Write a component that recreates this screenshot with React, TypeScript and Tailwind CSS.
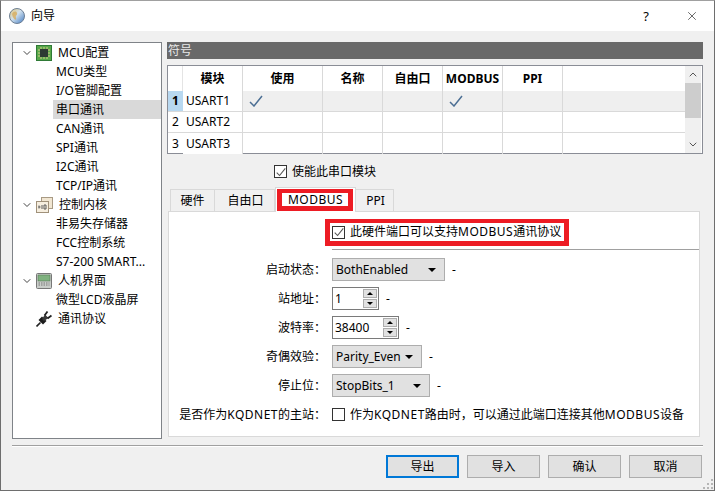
import React from 'react';
import { ChevronDown, ChevronUp, X } from 'lucide-react';

const treeItems = [
  { label: 'MCU配置', icon: 'chip', open: true },
  { label: 'MCU类型' },
  { label: 'I/O管脚配置' },
  { label: '串口通讯', selected: true },
  { label: 'CAN通讯' },
  { label: 'SPI通讯' },
  { label: 'I2C通讯' },
  { label: 'TCP/IP通讯' },
  { label: '控制内核', icon: 'core', open: true },
  { label: '非易失存储器' },
  { label: 'FCC控制系统' },
  { label: 'S7-200 SMART...' },
  { label: '人机界面', icon: 'hmi', open: true },
  { label: '微型LCD液晶屏' },
  { label: '通讯协议', icon: 'plug' },
];

const columns = ['模块', '使用', '名称', '自由口', 'MODBUS', 'PPI'];
const colWidths = ['w-[60px]', 'w-[80px]', 'w-[60px]', 'w-[60px]', 'w-[60px]', 'w-[60px]'];

function Caps({ children }: { children: React.ReactNode }) {
  return <span className="tracking-[0.5px]">{children}</span>;
}

function GlobeIcon() {
  return (
    <svg width="16" height="16" viewBox="0 0 16 16">
      <defs>
        <linearGradient id="globe" x1="0" y1="0" x2="1" y2="1">
          <stop offset="0" stopColor="#e8c46a" />
          <stop offset="0.45" stopColor="#cfe0ee" />
          <stop offset="1" stopColor="#3f78c0" />
        </linearGradient>
      </defs>
      <circle cx="8" cy="8" r="7.5" fill="url(#globe)" stroke="#6d7f94" />
      <path d="M3 6c2-3 4-3 5-1s-2 2-1 5-3 2-4-4z" fill="#d9a548" opacity="0.7" />
    </svg>
  );
}

function TreeIcon({ name }: { name: string }) {
  if (name === 'chip') {
    return (
      <svg width="16" height="16" viewBox="0 0 16 16">
        <rect x="0.5" y="0.5" width="15" height="15" fill="#58a84a" stroke="#2f7a36" />
        <rect x="4" y="4" width="8" height="8" fill="#2e3a33" />
        <path d="M5 2v2M8 2v2M11 2v2M5 12v2M8 12v2M11 12v2M2 5h2M2 8h2M2 11h2M12 5h2M12 8h2M12 11h2" stroke="#d8c98a" />
      </svg>
    );
  }
  if (name === 'core') {
    return (
      <svg width="17" height="16" viewBox="0 0 17 16">
        <rect x="5.5" y="0.5" width="11" height="11" fill="#f1e6d2" stroke="#a89a84" />
        <rect x="0.5" y="4.5" width="12" height="11" fill="#f6eedf" stroke="#a0917a" />
        <path d="M2.5 10h2M3 8.5v3M6 8v4M8 8h2v4H8z" stroke="#5a5a5a" fill="none" />
      </svg>
    );
  }
  if (name === 'hmi') {
    return (
      <svg width="16" height="16" viewBox="0 0 16 16">
        <rect x="0.5" y="0.5" width="15" height="15" rx="1" fill="#c9cdc9" stroke="#777" />
        <rect x="2" y="2" width="12" height="6" fill="#7fb27f" stroke="#4e6b4e" strokeWidth="0.5" />
        <path d="M2.5 10h11M2.5 12h11" stroke="#777" strokeDasharray="1.5 1" />
      </svg>
    );
  }
  return (
    <svg width="16" height="16" viewBox="0 0 16 16">
      <path d="M0.5 15.5 4.5 11.5" stroke="#222" strokeWidth="1.6" />
      <path d="M2.5 9 6 5.5 10.5 10 7 13.5z" fill="#1c1c1c" />
      <path d="M6 8 9 3.5 12.5 7 8 10z" fill="#3a3a3a" />
      <path d="M8.5 4.5 11.5 0.5M11.5 7.5 15.5 4.5" stroke="#222" strokeWidth="1.8" />
    </svg>
  );
}

function CheckMark({ className }: { className: string }) {
  return (
    <svg className={className} viewBox="0 0 14 12" fill="none">
      <path d="M1 7l4 4 8-10" stroke="currentColor" strokeWidth="1.5" />
    </svg>
  );
}

function CheckBox({ checked }: { checked?: boolean }) {
  return (
    <span className="flex h-[13px] w-[13px] shrink-0 items-center justify-center border border-[#333] bg-white">
      {checked && <CheckMark className="h-[10px] w-[10px] text-[#555]" />}
    </span>
  );
}

function Combo({ value, width }: { value: string; width: string }) {
  return (
    <div className={`flex h-[23px] items-center justify-between border border-[#adadad] bg-[#e1e1e1] pl-[3px] pr-[8px] ${width}`}>
      <span>{value}</span>
      <span className="h-0 w-0 border-x-[4px] border-t-[4px] border-x-transparent border-t-black" />
    </div>
  );
}

function Spin({ value, width }: { value: string; width: string }) {
  return (
    <div className={`flex h-[23px] items-center justify-between border border-[#7a7a7a] bg-white pl-[2px] pr-[1px] ${width}`}>
      <span>{value}</span>
      <div className="flex flex-col gap-px">
        {[0, 1].map((i) => (
          <span key={i} className="flex h-[9px] w-[14px] items-center justify-center border border-[#adadad] bg-[#e1e1e1]">
            <span className={`h-0 w-0 border-x-[3px] border-x-transparent ${i === 0 ? 'border-b-[3px] border-b-black' : 'border-t-[3px] border-t-black'}`} />
          </span>
        ))}
      </div>
    </div>
  );
}

function FormRow({ label, children, dash = true }: { label: React.ReactNode; children: React.ReactNode; dash?: boolean }) {
  return (
    <div className="flex h-[23px] items-center">
      <div className="w-[157px] shrink-0 whitespace-nowrap text-right">{label}</div>
      <div className="ml-[6px] flex items-center gap-[7px]">
        {children}
        {dash && <span>-</span>}
      </div>
    </div>
  );
}

function Button({ label, active }: { label: string; active?: boolean }) {
  return (
    <button className={`flex h-[23px] w-[73px] items-center justify-center bg-[#e1e1e1] ${active ? 'border-2 border-[#0078d7]' : 'border border-[#adadad]'}`}>
      {label}
    </button>
  );
}

export default function App() {
  return (
    <div className="flex h-[491px] w-[715px] flex-col overflow-hidden border border-[#6e6e6e] border-t-[#a0a0a0] bg-[#f0f0f0] font-['Noto_Sans','Noto_Sans_CJK_SC',sans-serif] text-[12px] leading-none text-black">
      {/* title bar */}
      <div className="flex h-[30px] shrink-0 items-center bg-white pl-[8px]">
        <GlobeIcon />
        <span className="ml-[6px]">向导</span>
        <span className="ml-auto text-[13px]">?</span>
        <X className="ml-[36px] mr-[15px] h-[14px] w-[14px]" strokeWidth={1} />
      </div>

      <div className="flex flex-1 gap-[5px] pl-[11px] pr-[11px] pt-[11px]">
        {/* tree */}
        <div className="h-[397px] w-[150px] shrink-0 border border-[#7f8388] bg-white">
          {treeItems.map((item) => (
            <div key={item.label} className="flex h-[19px] items-center whitespace-nowrap">
              <span className="flex w-[23px] shrink-0 justify-center pl-[4px]">
                {item.open && <ChevronDown className="h-[12px] w-[12px] text-[#444]" strokeWidth={2} />}
              </span>
              {item.icon ? (
                <>
                  <TreeIcon name={item.icon} />
                  <span className="ml-[6px]">{item.label}</span>
                </>
              ) : (
                <span className={`ml-[17px] flex h-full flex-1 items-center pl-[3px] ${item.selected ? 'bg-[#d9d9d9]' : ''}`}>{item.label}</span>
              )}
            </div>
          ))}
        </div>

        {/* right column */}
        <div className="flex w-[536px] flex-col">
          <div className="flex h-[17px] items-center bg-[#696969] pl-[1px] text-[#e8e8e8]">符号</div>

          <div className="mt-[6px] flex h-[89px] border border-[#8a8d96] bg-white">
            <div className="flex-1">
              <div className="flex h-[25px] font-bold">
                <div className="w-[15px] border-r border-[#e4e4e4]" />
                {columns.map((c, i) => (
                  <div key={c} className={`flex items-center justify-center whitespace-nowrap border-r border-[#d9d9d9] ${colWidths[i]}`}>
                    {c}
                  </div>
                ))}
              </div>
              {['USART1', 'USART2', 'USART3'].map((name, r) => (
                <div key={name} className={`flex h-[21px] ${r === 0 ? 'bg-[#efefef]' : ''} ${r < 2 ? 'border-b border-[#d9d9d9]' : ''}`}>
                  <div className={`flex w-[15px] items-center justify-center ${r === 0 ? 'bg-[#b8d8f0] font-bold' : ''}`}>{r + 1}</div>
                  <div className="flex w-[60px] items-center border-r border-[#d9d9d9] bg-white pl-[3px]">{name}</div>
                  {colWidths.slice(1).map((w, i) => (
                    <div key={i} className={`flex items-center border-r border-[#d9d9d9] pl-[6px] ${w}`}>
                      {r === 0 && (i === 0 || i === 3) && <CheckMark className="h-[12px] w-[14px] text-[#4c6f94]" />}
                    </div>
                  ))}
                </div>
              ))}
            </div>
            <div className="mr-px flex w-[16px] flex-col items-center bg-[#f0f0f0]">
              <ChevronUp className="h-[17px] w-[12px] text-[#555]" strokeWidth={2} />
              <div className="h-[35px] w-full bg-[#cdcdcd]" />
              <ChevronDown className="mt-auto h-[17px] w-[12px] text-[#555]" strokeWidth={2} />
            </div>
          </div>

          <div className="mt-[11px] flex items-center gap-[5px] pl-[107px]">
            <CheckBox checked />
            <span>使能此串口模块</span>
          </div>

          {/* tabs */}
          <div className="mt-[9px] flex h-[24px] items-end pl-[3px]">
            {['硬件', '自由口', 'MODBUS', 'PPI'].map((tab, i) =>
              tab === 'MODBUS' ? (
                <div key={tab} className="relative z-10 -mb-px flex h-[25px] w-[81px] items-center justify-center border border-b-0 border-[#d9d9d9] bg-white pb-[1px]">
                  <Caps>{tab}</Caps>
                  <div className="absolute left-[1px] top-[1px] h-[22px] w-[76px] border-[5px] border-t-[4px] border-[#ed1c24]" />
                </div>
              ) : (
                <div key={tab} className={`flex h-[22px] items-center justify-center border border-b-0 border-[#d9d9d9] ${i === 0 ? 'w-[45px]' : i === 1 ? 'w-[60px] border-l-0 pl-[2px]' : 'w-[38px] border-l-0 pl-[2px]'}`}>
                  {tab}
                </div>
              ),
            )}
          </div>

          <div className="relative ml-px h-[226px] w-[532px] border border-[#d9d9d9] bg-white pt-[13px]">
            <div className="flex h-[14px] items-center gap-[5px] pl-[163px]">
              <CheckBox checked />
              <span className="whitespace-nowrap">此硬件端口可以支持<Caps>MODBUS</Caps>通讯协议</span>
            </div>
            <div className="absolute left-[156px] top-[7px] h-[27px] w-[244px] border-[5px] border-t-[4px] border-[#ed1c24]" />
            <div className="ml-[163px] mt-[10px] h-px bg-[#a0a0a0]" />
            <div className="mt-[8px] flex flex-col gap-[6px]">
              <FormRow label="启动状态：">
                <Combo value="BothEnabled" width="w-[113px]" />
              </FormRow>
              <FormRow label="站地址：">
                <Spin value="1" width="w-[47px]" />
              </FormRow>
              <FormRow label="波特率：">
                <Spin value="38400" width="w-[67px]" />
              </FormRow>
              <FormRow label="奇偶效验：">
                <Combo value="Parity_Even" width="w-[90px]" />
              </FormRow>
              <FormRow label="停止位：">
                <Combo value="StopBits_1" width="w-[98px]" />
              </FormRow>
              <FormRow label={<>是否作为<Caps>KQDNET</Caps>的主站：</>} dash={false}>
                <span className="-mr-[2px]"><CheckBox /></span>
                <span className="whitespace-nowrap">作为<Caps>KQDNET</Caps>路由时，可以通过此端口连接其他<Caps>MODBUS</Caps>设备</span>
              </FormRow>
            </div>
          </div>
        </div>
      </div>

      {/* footer */}
      <div className="mx-[11px] h-[2px] shrink-0 border-t border-[#a0a0a0] bg-white" />
      <div className="relative flex h-[43px] shrink-0 justify-end gap-[8px] pr-[12px] pt-[8px]">
        <Button label="导出" active />
        <Button label="导入" />
        <Button label="确认" />
        <Button label="取消" />
        <svg className="absolute bottom-0 right-0" width="12" height="12" viewBox="0 0 12 12" fill="#b5b5b5">
          <rect x="9" y="1" width="2" height="2" />
          <rect x="5" y="5" width="2" height="2" />
          <rect x="9" y="5" width="2" height="2" />
          <rect x="1" y="9" width="2" height="2" />
          <rect x="5" y="9" width="2" height="2" />
          <rect x="9" y="9" width="2" height="2" />
        </svg>
      </div>
    </div>
  );
}
